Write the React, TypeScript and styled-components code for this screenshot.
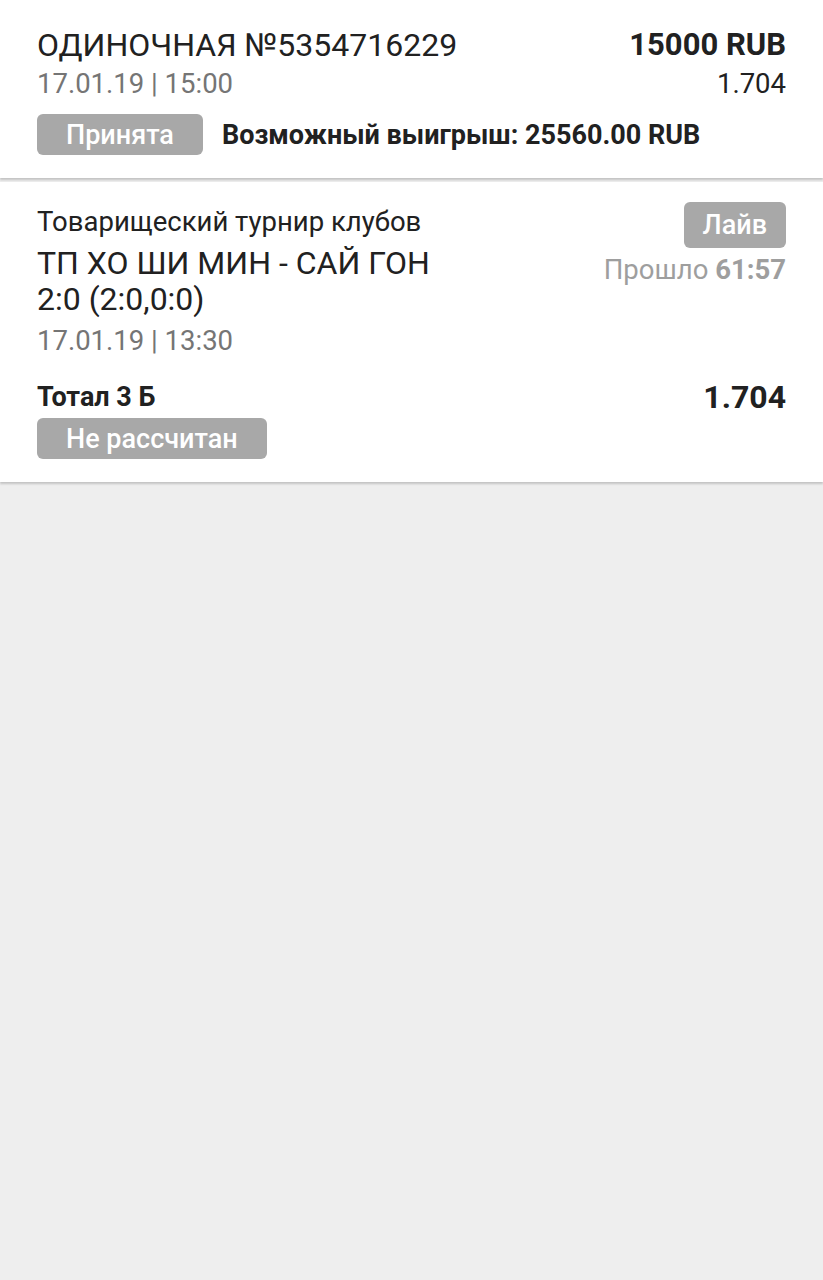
import styled, { createGlobalStyle } from "styled-components";

const GlobalStyle = createGlobalStyle`
  html, body {
    margin: 0;
    padding: 0;
    background: #eeeeee;
    font-family: Roboto, "Noto Sans", sans-serif;
  }
`;

const colors = {
  text: "#212121",
  sub: "#757575",
  muted: "#9e9e9e",
  badge: "#a8a8a8",
  white: "#ffffff",
};

const App = () => {
  return (
    <Page>
      <GlobalStyle />
      <Card>
        <Row>
          <Title>{"ОДИНОЧНАЯ №5354716229"}</Title>
          <Amount>{"15000 RUB"}</Amount>
        </Row>
        <Row>
          <DateText>{"17.01.19 | 15:00"}</DateText>
          <Coef>{"1.704"}</Coef>
        </Row>
        <StatusRow>
          <Badge>{"Принята"}</Badge>
          <Win>{"Возможный выигрыш: 25560.00 RUB"}</Win>
        </StatusRow>
      </Card>

      <Card second>
        <EventHead>
          <EventInfo>
            <League>{"Товарищеский турнир клубов"}</League>
            <Teams>{"ТП ХО ШИ МИН - САЙ ГОН"}</Teams>
            <Teams>{"2:0 (2:0,0:0)"}</Teams>
            <DateText tall>{"17.01.19 | 13:30"}</DateText>
          </EventInfo>
          <LiveBox>
            <LiveBadge>{"Лайв"}</LiveBadge>
            <Elapsed>
              {"Прошло "}
              <b>{"61:57"}</b>
            </Elapsed>
          </LiveBox>
        </EventHead>
        <OutcomeRow>
          <Outcome>{"Тотал 3 Б"}</Outcome>
          <OutcomeCoef>{"1.704"}</OutcomeCoef>
        </OutcomeRow>
        <Badge wide>{"Не рассчитан"}</Badge>
      </Card>
    </Page>
  );
};

export default App;

const Page = styled.div`
  min-height: 1280px;
  background: #eeeeee;
`;

const Card = styled.div<{ second?: boolean }>`
  background: ${colors.white};
  padding: ${(p) => (p.second ? "17px 37px 23px" : "26px 37px 23px")};
  box-shadow: 0 2px 2px rgba(0, 0, 0, 0.18);
  margin-bottom: 4px;
  position: relative;
`;

const Row = styled.div`
  display: flex;
  justify-content: space-between;
  align-items: center;
`;

const Title = styled.div`
  font-size: 32px;
  line-height: 38px;
  color: ${colors.text};
`;

const Amount = styled.div`
  font-size: 31px;
  line-height: 38px;
  font-weight: 700;
  color: ${colors.text};
`;

const DateText = styled.div<{ tall?: boolean }>`
  font-size: 27.5px;
  line-height: ${(p) => (p.tall ? "48px" : "40px")};
  color: ${colors.sub};
`;

const Coef = styled.div`
  font-size: 27.5px;
  line-height: 40px;
  color: ${colors.text};
`;

const StatusRow = styled.div`
  display: flex;
  align-items: center;
  gap: 19px;
  margin-top: 10px;
`;

const Badge = styled.div<{ wide?: boolean }>`
  display: inline-flex;
  align-items: center;
  height: 41px;
  padding: 0 29px;
  border-radius: 6px;
  background: ${colors.badge};
  color: ${colors.white};
  font-size: 27px;
  font-weight: 500;
  margin-top: ${(p) => (p.wide ? "1px" : "0")};
`;

const Win = styled.div`
  font-size: 27px;
  font-weight: 700;
  color: ${colors.text};
`;

const EventHead = styled.div`
  display: flex;
  justify-content: space-between;
  align-items: flex-start;
`;

const EventInfo = styled.div`
  display: flex;
  flex-direction: column;
`;

const League = styled.div`
  font-size: 27.5px;
  line-height: 46px;
  color: ${colors.text};
`;

const Teams = styled.div`
  font-size: 32px;
  line-height: 36px;
  color: ${colors.text};
`;

const LiveBox = styled.div`
  display: flex;
  flex-direction: column;
  align-items: flex-end;
  padding-top: 3px;
`;

const LiveBadge = styled.div`
  display: inline-flex;
  align-items: center;
  height: 46px;
  padding: 0 19px;
  border-radius: 6px;
  background: ${colors.badge};
  color: ${colors.white};
  font-size: 27px;
  font-weight: 500;
`;

const Elapsed = styled.div`
  font-size: 27.5px;
  line-height: 44px;
  color: ${colors.muted};
  b {
    font-weight: 700;
  }
`;

const OutcomeRow = styled.div`
  display: flex;
  justify-content: space-between;
  align-items: center;
  height: 40px;
  margin-top: 12px;
`;

const Outcome = styled.div`
  font-size: 27px;
  font-weight: 700;
  color: ${colors.text};
`;

const OutcomeCoef = styled.div`
  font-size: 32px;
  font-weight: 700;
  color: ${colors.text};
`;
